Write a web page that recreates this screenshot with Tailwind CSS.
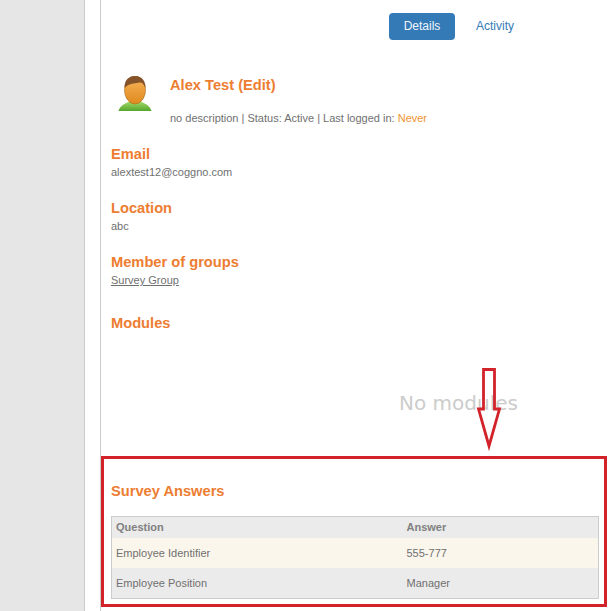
<!DOCTYPE html>
<html lang="en">
  <head>
    <meta charset="UTF-8" />
    <script src="https://cdn.jsdelivr.net/npm/@tailwindcss/browser@4"></script>
    <title>User details</title>
  </head>
  <body class="h-[611px] w-[614px] overflow-hidden bg-white font-['Liberation_Sans',Arial,sans-serif] text-[11px] text-[#707070]">
    <div class="relative flex h-full">
      <!-- sidebar -->
      <div class="w-[85px] shrink-0 border-r border-[#ccc] bg-[#e6e6e6]"></div>
      <div class="w-[15px] shrink-0 bg-white"></div>

      <!-- main -->
      <main class="h-full w-[507px] shrink-0 border-l border-[#ccc]">
        <nav class="flex h-[63px] items-start pl-[288px] pt-[13px]">
          <a class="flex h-[27px] w-[66px] items-center justify-center rounded-[4px] bg-[#337ab7] pb-px text-[12px] text-[#f2f6fa]">Details</a>
          <a class="ml-[21px] flex h-[27px] items-center pb-px text-[12px] text-[#337ab7]">Activity</a>
        </nav>

        <section class="flex h-[82px] pl-[17px]">
          <svg class="mt-[13px] h-[35px] w-[34px] shrink-0" viewBox="0 0 34 35">
            <defs>
              <linearGradient id="skin" x1="0" y1="0" x2="0" y2="1">
                <stop offset="0" stop-color="#f7b55c" />
                <stop offset="1" stop-color="#e08a1e" />
              </linearGradient>
              <linearGradient id="shirt" x1="0" y1="0" x2="0" y2="1">
                <stop offset="0" stop-color="#a6dc6c" />
                <stop offset="1" stop-color="#55a62c" />
              </linearGradient>
            </defs>
            <path d="M0.5 35 C2 29 8 27 13 25 L21 25 C26 27 32 29 33.5 35 Z" fill="url(#shirt)" />
            <ellipse cx="17" cy="14" rx="10.5" ry="14" fill="url(#skin)" stroke="#a86a1c" stroke-width="0.6" />
            <path d="M6.7 12 C6 4 11 0 17 0 C24 0 27.8 5 27.4 12 C26 8 24 6 21 6.5 C16 8 10.5 7 6.7 12 Z" fill="#84532a" />
          </svg>
          <div class="ml-[18px] pt-[13px]">
            <h1 class="text-[14.66px] leading-[18px] font-bold text-[#ed7d31]">Alex Test (Edit)</h1>
            <p class="mt-[18px] leading-[13px]">no description | Status: Active | Last logged in: <span class="text-[#f0932f]">Never</span></p>
          </div>
        </section>

        <section class="pl-[10px]">
          <h2 class="text-[14.66px] leading-[18px] font-bold text-[#ed7d31]">Email</h2>
          <p class="mt-[3px] h-[33px] leading-[13px]">alextest12@coggno.com</p>
          <h2 class="text-[14.66px] leading-[18px] font-bold text-[#ed7d31]">Location</h2>
          <p class="mt-[3px] h-[33px] leading-[13px]">abc</p>
          <h2 class="text-[14.66px] leading-[18px] font-bold text-[#ed7d31]">Member of groups</h2>
          <p class="mt-[3px] h-[33px] leading-[13px] underline">Survey Group</p>
          <h2 class="mt-[7px] text-[14.66px] leading-[18px] font-bold text-[#ed7d31]">Modules</h2>
          <p class="mt-[59px] h-[65px] pl-[288px] font-['DejaVu_Sans',sans-serif] text-[20px] leading-[24px] text-[#ccc]">No modules</p>
        </section>

        <!-- highlighted survey block -->
        <section class="h-[151px] w-[506px] border-[3px] border-[#d2232a] px-[7px] pt-[23px]">
          <h2 class="text-[14.66px] leading-[18px] font-bold text-[#ed7d31]">Survey Answers</h2>
          <table class="mt-[16px] w-[488px] table-fixed border border-[#ccc]">
            <thead>
              <tr class="h-[21px] bg-[#ebebeb] text-left font-bold text-[#808080]">
                <th class="w-[290px] pl-[4px]">Question</th>
                <th class="pl-[5px]">Answer</th>
              </tr>
            </thead>
            <tbody>
              <tr class="h-[30px] bg-[#fbf6ec]">
                <td class="pt-[2px] pl-[4px]">Employee Identifier</td>
                <td class="pt-[2px] pl-[5px]">555-777</td>
              </tr>
              <tr class="h-[31px] bg-[#ebebeb]">
                <td class="pt-px pl-[4px]">Employee Position</td>
                <td class="pt-px pl-[5px]">Manager</td>
              </tr>
            </tbody>
          </table>
        </section>
      </main>

      <!-- annotation arrow -->
      <svg class="absolute top-[365px] left-[472px] h-[90px] w-[34px]" viewBox="0 0 34 90">
        <path d="M11.5 4.5 H22.5 V44 H27.5 L17 81 L6.5 44 H11.5 Z" fill="none" stroke="#d2232a" stroke-width="2.8" />
      </svg>
    </div>
  </body>
</html>
